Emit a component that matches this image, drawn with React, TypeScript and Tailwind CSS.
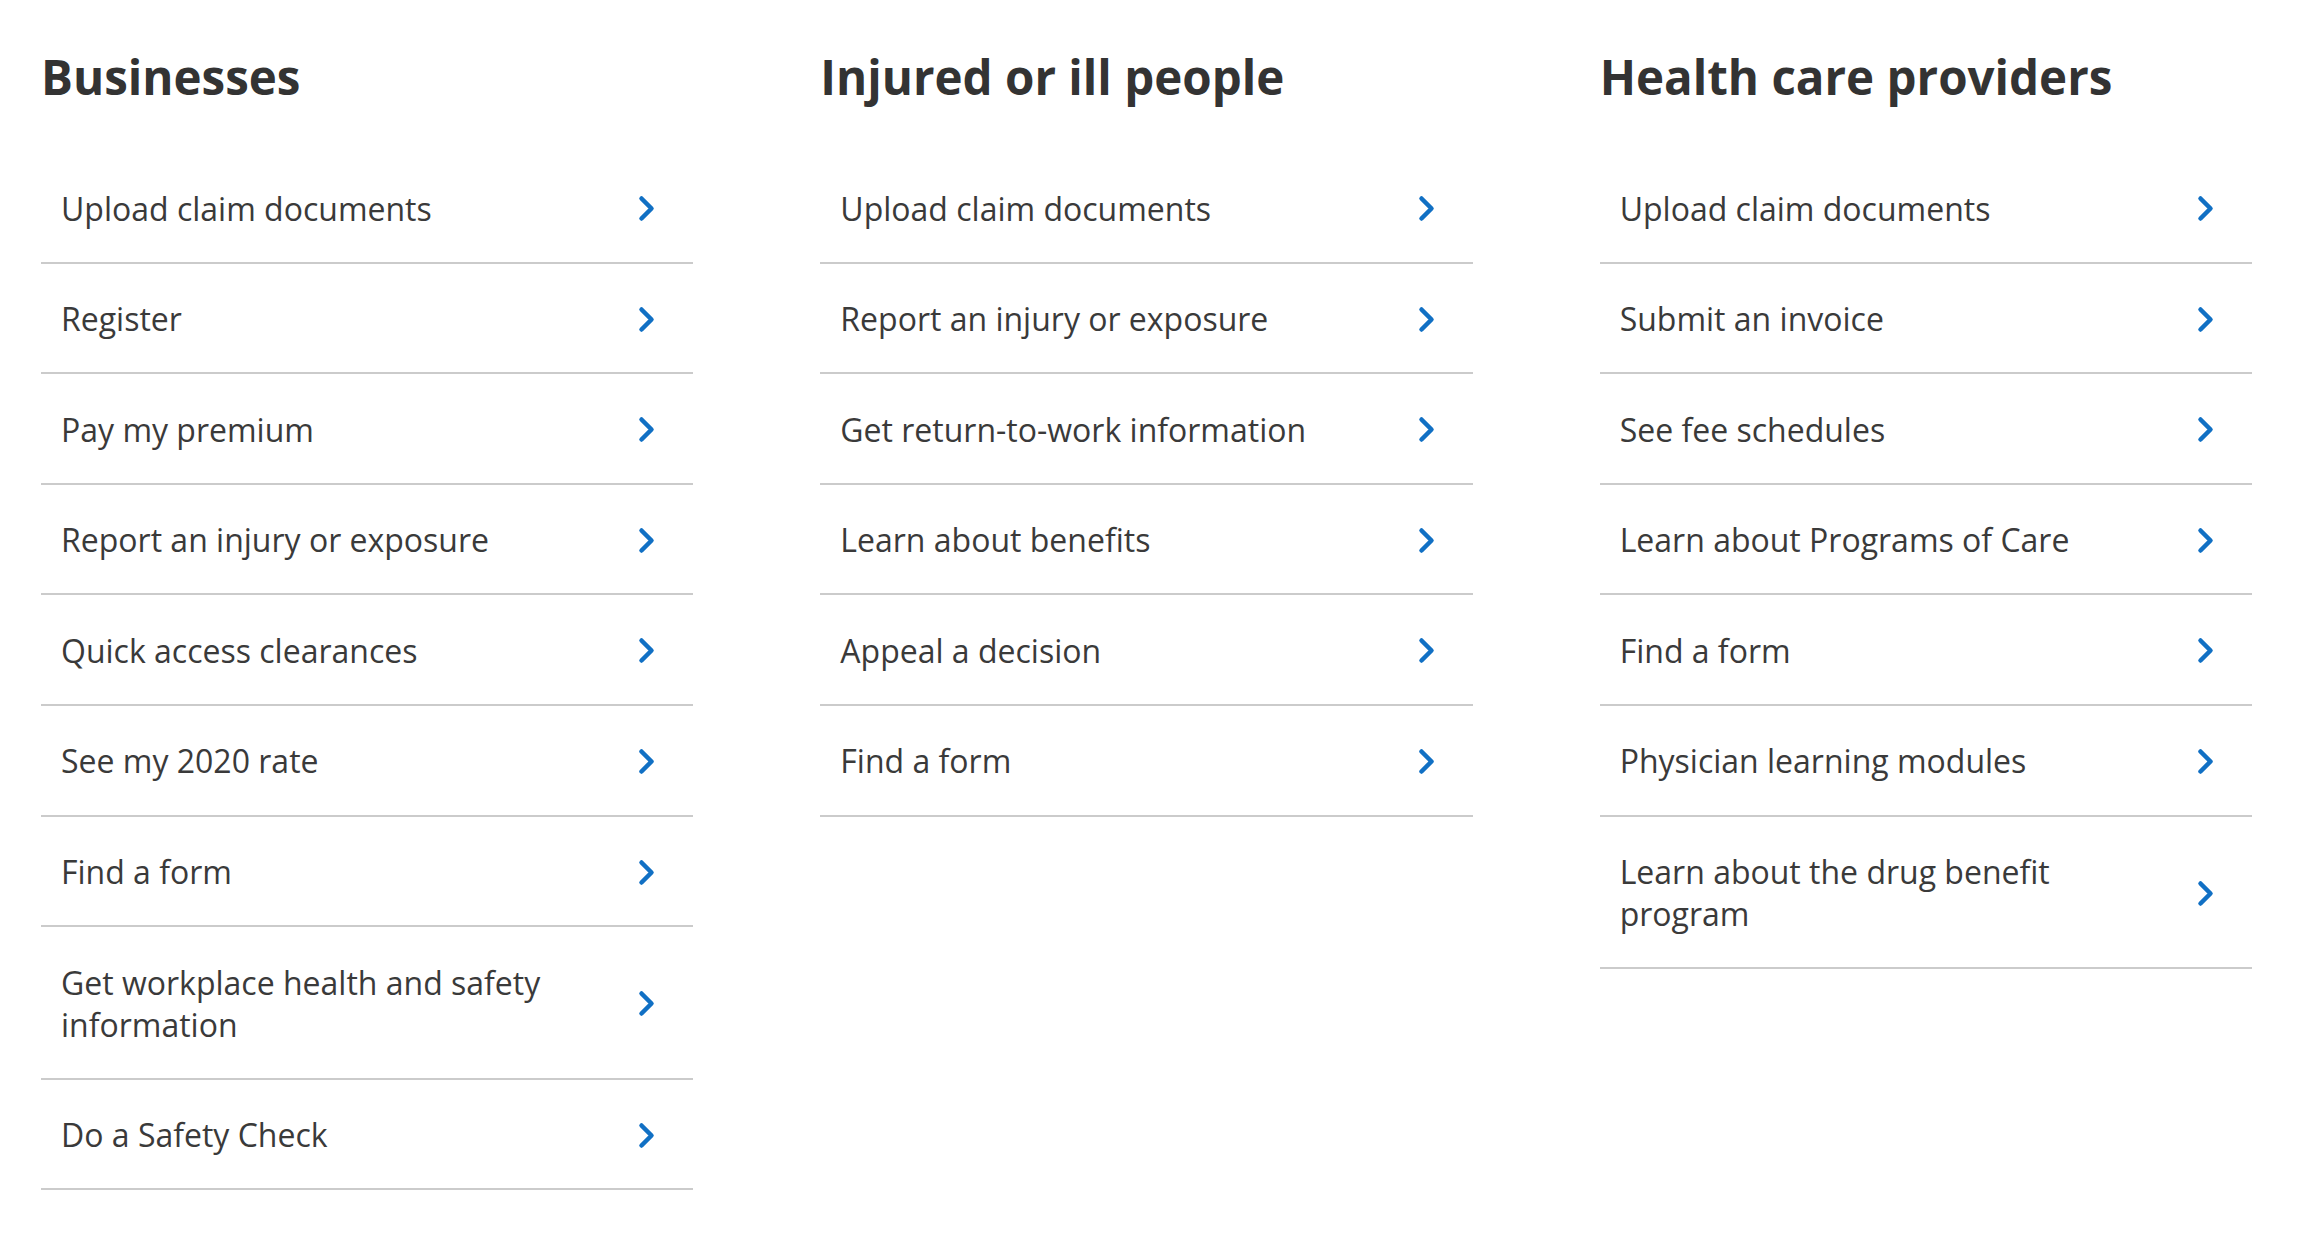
const columns: { title: string; links: string[] }[] = [
  {
    title: "Businesses",
    links: [
      "Upload claim documents",
      "Register",
      "Pay my premium",
      "Report an injury or exposure",
      "Quick access clearances",
      "See my 2020 rate",
      "Find a form",
      "Get workplace health and safety information",
      "Do a Safety Check",
    ],
  },
  {
    title: "Injured or ill people",
    links: [
      "Upload claim documents",
      "Report an injury or exposure",
      "Get return-to-work information",
      "Learn about benefits",
      "Appeal a decision",
      "Find a form",
    ],
  },
  {
    title: "Health care providers",
    links: [
      "Upload claim documents",
      "Submit an invoice",
      "See fee schedules",
      "Learn about Programs of Care",
      "Find a form",
      "Physician learning modules",
      "Learn about the drug benefit program",
    ],
  },
];

function Chevron() {
  return (
    <svg width="17" height="27" viewBox="0 0 17 27" fill="none" className="shrink-0">
      <path
        d="M3.5 3.5 L13.5 13.5 L3.5 23.5"
        stroke="#1170c4"
        strokeWidth="4.5"
        strokeLinecap="round"
        strokeLinejoin="round"
      />
    </svg>
  );
}

export default function App() {
  return (
    <div className="min-h-[1258px] w-[2300px] bg-white pl-[41px] pr-[48px] font-['Open_Sans',sans-serif]">
      <div className="grid grid-cols-3 gap-x-[127px]">
        {columns.map((col) => (
          <section key={col.title}>
            <h2 className="pt-[48px] pb-[47px] text-[47.5px] font-bold leading-[58px] text-[#333333]">
              {col.title}
            </h2>
            <ul>
              {col.links.map((link) => (
                <li key={link}>
                  <a
                    href="#"
                    className="flex items-center justify-between border-b-2 border-[#cbcbcb] pt-[34.5px] pb-[32.1px] pl-[20px] pr-[38px]"
                  >
                    <span className="max-w-[520px] text-[32px] leading-[42px] text-[#3a3a3a]">
                      {link}
                    </span>
                    <Chevron />
                  </a>
                </li>
              ))}
            </ul>
          </section>
        ))}
      </div>
    </div>
  );
}
